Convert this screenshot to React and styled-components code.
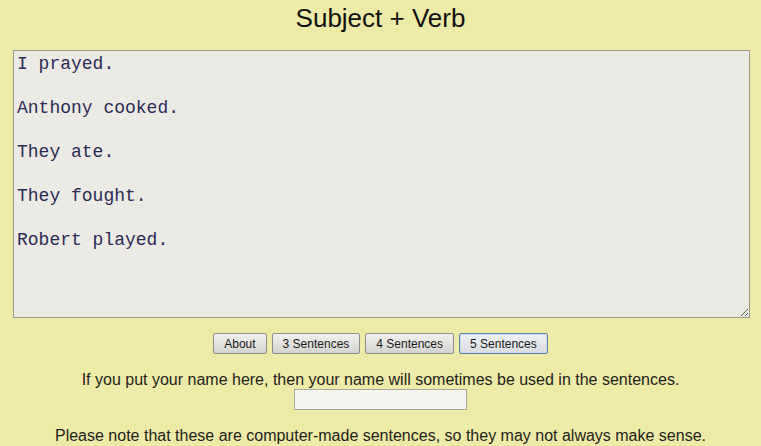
import styled, { createGlobalStyle } from 'styled-components';

const GlobalStyle = createGlobalStyle`
  body {
    margin: 0;
    background: #eeeaa8;
    font-family: 'Liberation Sans', Arial, sans-serif;
  }
`;

const Page = styled.div`
  width: 761px;
  height: 446px;
  display: flex;
  flex-direction: column;
  align-items: center;
  background: #eeeaa8;
  overflow: hidden;
`;

const Title = styled.h1`
  margin: 0;
  height: 36px;
  line-height: 36px;
  font-size: 26px;
  font-weight: normal;
  color: #111;
`;

const Output = styled.textarea`
  box-sizing: border-box;
  width: 737px;
  height: 268px;
  margin: 14px 0 0 2px;
  padding: 2px 3px;
  border: 1px solid #9a9a90;
  background: #ebeae5;
  color: #2d2b55;
  font-family: 'Liberation Mono', 'Courier New', monospace;
  font-size: 18px;
  line-height: 22px;
  outline: none;
`;

const ButtonRow = styled.div`
  display: flex;
  gap: 5px;
  margin-top: 15px;
`;

const Button = styled.button`
  box-sizing: border-box;
  height: 21px;
  padding: 0 10px;
  font-family: 'Liberation Sans', Arial, sans-serif;
  font-size: 12px;
  color: #1a1a1a;
  border: 1px solid ${(p) => (p.$active ? '#5f7fa6' : '#8e8e88')};
  border-radius: 2px;
  background: ${(p) =>
    p.$active
      ? 'linear-gradient(#eef1f4, #d9dde2)'
      : 'linear-gradient(#f0f0ed, #d4d4d0)'};
  box-shadow: ${(p) => (p.$active ? 'inset 0 0 0 1px #c9dbee' : 'none')};
`;

const Note = styled.p`
  margin: ${(p) => p.$top}px 0 0;
  font-size: 16px;
  line-height: 18px;
  color: #1e1e1a;
`;

const NameInput = styled.input`
  box-sizing: border-box;
  width: 173px;
  height: 21px;
  margin: 0;
  border: 1px solid #a8a8a0;
  background: #f4f3ee;
  outline: none;
`;

const sentences = ['I prayed.', 'Anthony cooked.', 'They ate.', 'They fought.', 'Robert played.'];

export default function App() {
  return (
    <Page>
      <GlobalStyle />
      <Title>Subject + Verb</Title>
      <Output readOnly value={sentences.join('\n\n')} />
      <ButtonRow>
        <Button>About</Button>
        <Button>3 Sentences</Button>
        <Button>4 Sentences</Button>
        <Button $active>5 Sentences</Button>
      </ButtonRow>
      <Note $top={17}>If you put your name here, then your name will sometimes be used in the sentences.</Note>
      <NameInput />
      <Note $top={17}>Please note that these are computer-made sentences, so they may not always make sense.</Note>
    </Page>
  );
}
